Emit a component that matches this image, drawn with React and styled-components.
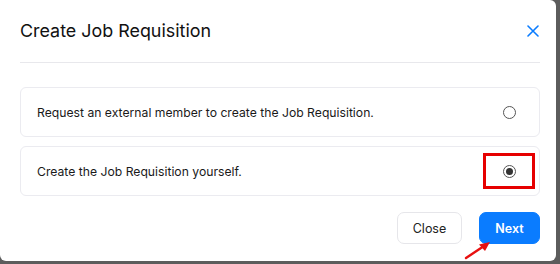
import React, { useState } from 'react';
import styled, { createGlobalStyle } from 'styled-components';

const GlobalStyle = createGlobalStyle`
  html, body {
    margin: 0;
    padding: 0;
    background: #5c5c5c;
    font-family: Inter, "Noto Sans", sans-serif;
  }
`;

const options = [
  { id: 'external', label: 'Request an external member to create the Job Requisition.' },
  { id: 'self', label: 'Create the Job Requisition yourself.', highlight: true },
];

const App = () => {
  const [choice, setChoice] = useState('self');

  return (
    <>
      <GlobalStyle />
      <Modal>
        <Header>
          <Title>Create Job Requisition</Title>
          <CloseIcon aria-label="Close">
            <svg width="12" height="12" viewBox="0 0 12 12">
              <path d="M1 1L11 11M11 1L1 11" stroke="#0a7cff" strokeWidth="1.6" strokeLinecap="round" />
            </svg>
          </CloseIcon>
        </Header>
        <Body>
          {options.map((o) => (
            <Option key={o.id} onClick={() => setChoice(o.id)}>
              <span>{o.label}</span>
              <RadioSlot $highlight={o.highlight}>
                <Radio $checked={choice === o.id} />
              </RadioSlot>
            </Option>
          ))}
        </Body>
        <Footer>
          <Button $width="65px">Close</Button>
          <Button $primary $width="61px">Next</Button>
          <Arrow width="30" height="20" viewBox="0 0 30 20">
            <path d="M2 18L20 6" stroke="#e81010" strokeWidth="2.4" strokeLinecap="round" />
            <path d="M26 2L15 4.5L21 11Z" fill="#e81010" />
          </Arrow>
        </Footer>
      </Modal>
    </>
  );
};

export default App;

const Modal = styled.div`
  width: 556px;
  height: 261px;
  box-sizing: border-box;
  background: #fff;
  border-radius: 0 6px 6px 6px;
  display: flex;
  flex-direction: column;
  padding: 0 16px 0 20px;
`;

const Header = styled.div`
  display: flex;
  align-items: center;
  justify-content: space-between;
  height: 63px;
  border-bottom: 1px solid #e8e8ec;
  box-sizing: border-box;
  padding-bottom: 1px;
`;

const Title = styled.h2`
  margin: 0;
  font-size: 17.9px;
  font-weight: 400;
  color: #111;
`;

const CloseIcon = styled.button`
  border: 0;
  background: none;
  padding: 0;
  margin-right: 1px;
  display: flex;
  cursor: pointer;
`;

const Body = styled.div`
  display: flex;
  flex-direction: column;
  gap: 9px;
  padding-top: 24px;
`;

const Option = styled.div`
  height: 50px;
  box-sizing: border-box;
  border: 1px solid #ebebf0;
  border-radius: 6px;
  display: flex;
  align-items: center;
  justify-content: space-between;
  padding: 0 4px 0 16px;
  font-size: 12.2px;
  color: #1a1a1a;
  cursor: pointer;
`;

const RadioSlot = styled.div`
  width: 52px;
  height: 36px;
  box-sizing: border-box;
  display: flex;
  align-items: center;
  justify-content: center;
  border: 3px solid ${(p) => (p.$highlight ? '#e60000' : 'transparent')};
`;

const Radio = styled.span`
  width: 13px;
  height: 13px;
  box-sizing: border-box;
  border-radius: 50%;
  border: 1px solid #555;
  display: flex;
  align-items: center;
  justify-content: center;

  &::after {
    content: '';
    width: 7px;
    height: 7px;
    border-radius: 50%;
    background: #333;
    display: ${(p) => (p.$checked ? 'block' : 'none')};
  }
`;

const Footer = styled.div`
  position: relative;
  display: flex;
  justify-content: flex-end;
  gap: 17px;
  padding-top: 16px;
`;

const Button = styled.button`
  height: 32px;
  width: ${(p) => p.$width};
  box-sizing: border-box;
  padding: 0;
  border-radius: 7px;
  font-family: inherit;
  font-size: 12.5px;
  font-weight: ${(p) => (p.$primary ? 600 : 400)};
  color: ${(p) => (p.$primary ? '#fff' : '#222')};
  background: ${(p) => (p.$primary ? '#0a7cff' : '#fff')};
  border: 1px solid ${(p) => (p.$primary ? '#0a7cff' : '#e6e6ea')};
  cursor: pointer;
`;

const Arrow = styled.svg`
  position: absolute;
  left: 444px;
  top: 44px;
`;
